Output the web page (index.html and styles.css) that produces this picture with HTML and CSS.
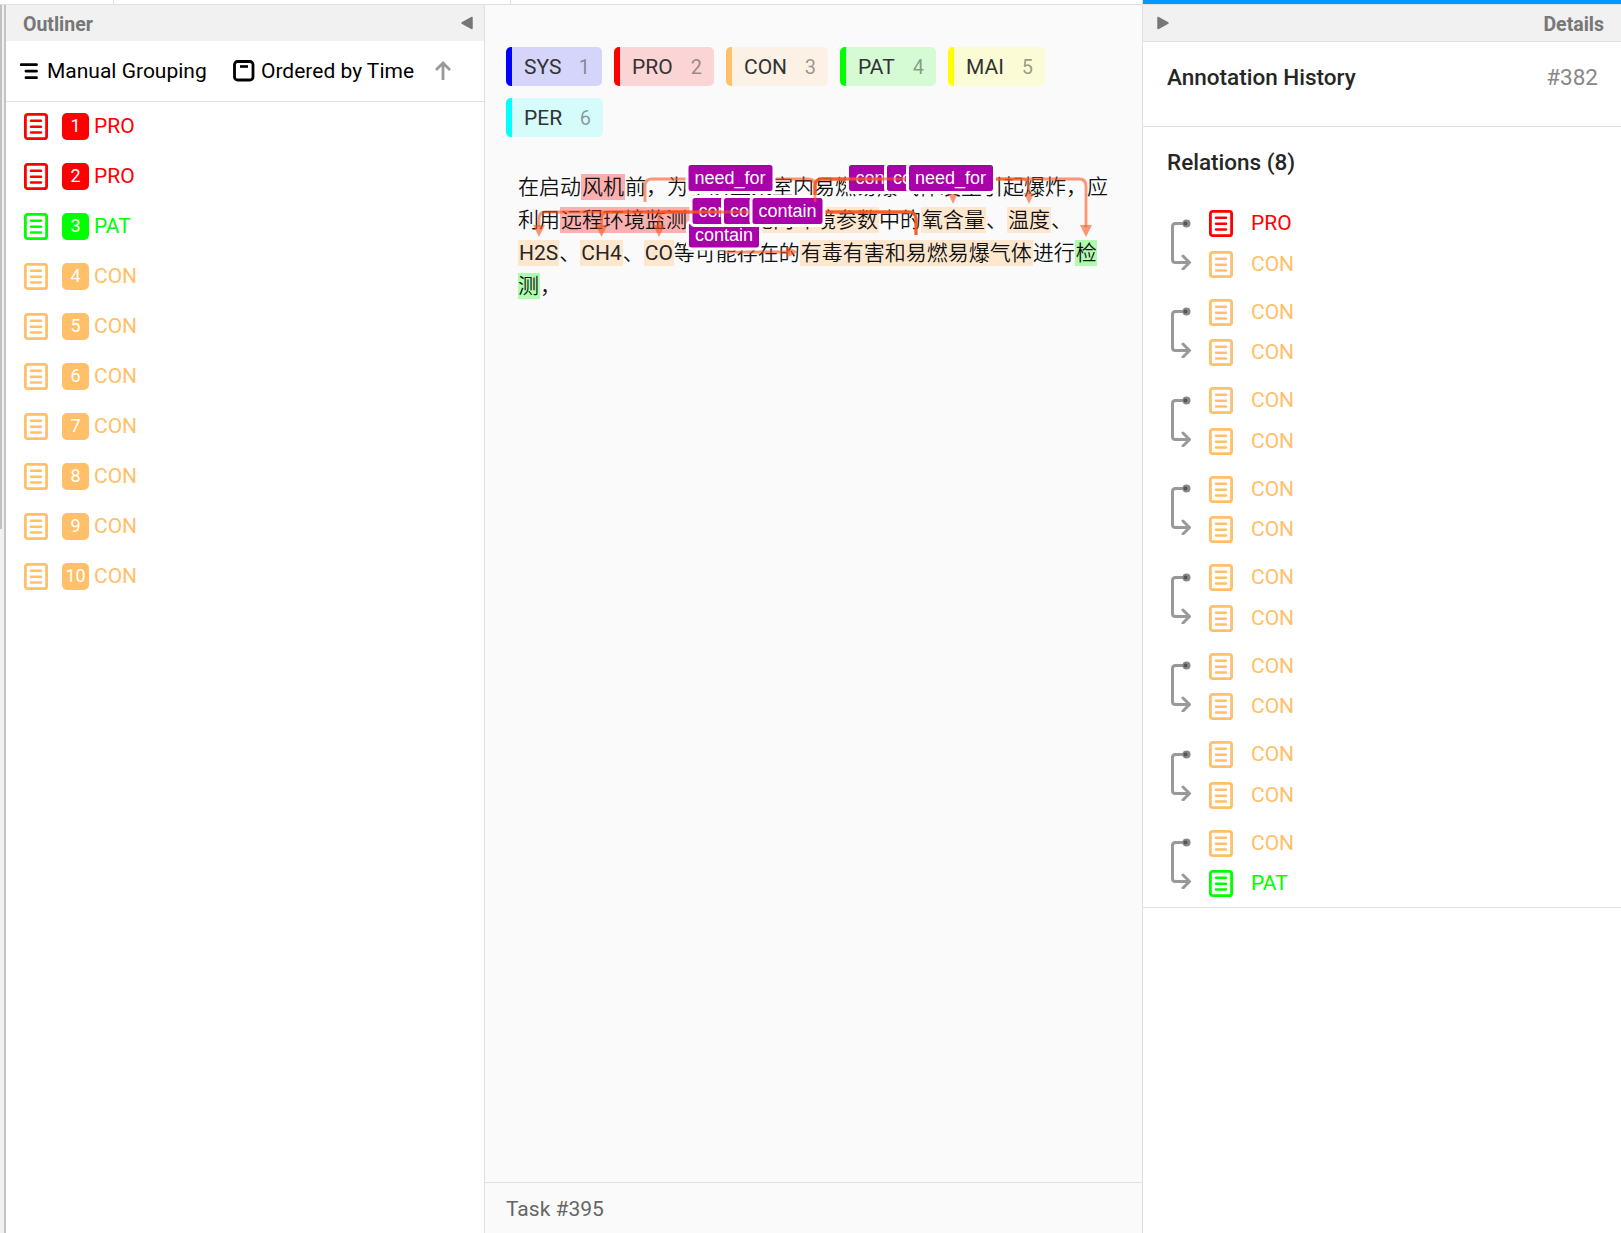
FILE: index.html
```html
<!DOCTYPE html>
<html lang="zh-CN">
<head>
    <meta charset="UTF-8">
    <meta name="viewport" content="width=device-width, initial-scale=1.0">
    <title>Labeling - Task #395</title>
    <link rel="stylesheet" href="styles.css">
</head>
<body>
    <svg class="sprite">
        <symbol id="icon-text" viewBox="0 0 24 27">
            <rect x="1.4" y="1.4" width="21.2" height="24.2" rx="2.2" fill="none" stroke="currentColor" stroke-width="2.8"/>
            <path d="M7 7.8h10M7 13.7h10M7 19.6h10" stroke="currentColor" stroke-width="2.5" stroke-linecap="round"/>
        </symbol>
        <symbol id="icon-relation" viewBox="0 0 21 51">
            <path d="M16 4.5H5.500Q2.500 4.500 2.500 7.500V40.500Q2.500 43.500 5.500 43.500H19M13 37L19.500 43.500L13 50" fill="none" stroke="#999" stroke-width="3" stroke-linecap="round" stroke-linejoin="round"/>
            <circle cx="16.500" cy="4.500" r="4" fill="#888"/>
            <circle cx="15.500" cy="4.500" r="2" fill="#555"/>
        </symbol>
    </svg>

    <div class="topbar">
        <div class="tab first"></div>
        <div class="tab second"></div>
        <div class="tab rest"></div>
        <div class="tab active"></div>
    </div>

    <div class="editor">
        <div class="gutter"><div class="thumb"></div></div>

        <div class="outliner">
            <div class="panel-header">
                <span>Outliner</span>
                <svg width="12" height="14" viewBox="0 0 12 14"><path d="M11 1.500V12.500L1 7Z" fill="#777" stroke="#777" stroke-width="1.500" stroke-linejoin="round"/></svg>
            </div>
            <div class="toolbar">
                <svg width="18" height="17" viewBox="0 0 18 17"><path d="M1.200 1.700H16.500M6 8.200H16.500M6 14.700H16.500" stroke="#000" stroke-width="2.800" stroke-linecap="round"/></svg>
                <span class="grouping">Manual Grouping</span>
                <svg width="22" height="22" viewBox="0 0 22 22"><rect x="1.500" y="1.500" width="18.500" height="18.500" rx="3" fill="none" stroke="#000" stroke-width="2.800"/><path d="M7 6.500H15" stroke="#000" stroke-width="2.600"/></svg>
                <span class="ordering">Ordered by Time</span>
                <svg width="18" height="20" viewBox="0 0 18 20"><path d="M9 19V2.500M2 9L9 2L16 9" fill="none" stroke="#999" stroke-width="2.800"/></svg>
            </div>
            <div class="regions">
                <div class="region pro"><svg class="icon"><use href="#icon-text"/></svg><span class="num">1</span>PRO</div>
                <div class="region pro"><svg class="icon"><use href="#icon-text"/></svg><span class="num">2</span>PRO</div>
                <div class="region pat"><svg class="icon"><use href="#icon-text"/></svg><span class="num">3</span>PAT</div>
                <div class="region con"><svg class="icon"><use href="#icon-text"/></svg><span class="num">4</span>CON</div>
                <div class="region con"><svg class="icon"><use href="#icon-text"/></svg><span class="num">5</span>CON</div>
                <div class="region con"><svg class="icon"><use href="#icon-text"/></svg><span class="num">6</span>CON</div>
                <div class="region con"><svg class="icon"><use href="#icon-text"/></svg><span class="num">7</span>CON</div>
                <div class="region con"><svg class="icon"><use href="#icon-text"/></svg><span class="num">8</span>CON</div>
                <div class="region con"><svg class="icon"><use href="#icon-text"/></svg><span class="num">9</span>CON</div>
                <div class="region con"><svg class="icon"><use href="#icon-text"/></svg><span class="num">10</span>CON</div>
            </div>
        </div>

        <div class="main">
            <div class="content">
                <div class="labels">
                    <div class="label sys">SYS <span>1</span></div>
                    <div class="label pro-label">PRO <span>2</span></div>
                    <div class="label con-label">CON <span>3</span></div>
                    <div class="label pat-label">PAT <span>4</span></div>
                    <div class="label mai">MAI <span>5</span></div>
                    <div class="label per">PER <span>6</span></div>
                </div>

                <div class="text">
                    <div class="lines">在启动<mark class="m-pro">风机</mark>前，为了防止泵室内易燃易爆气体发生引起爆炸，应<br>利用<mark class="m-pro">远程环境监测系统</mark>对<mark class="m-con">舱内环境参数</mark>中的<mark class="m-con">氧含量</mark>、<mark class="m-con">温度</mark>、<br><mark class="m-con latin">H2S</mark>、<mark class="m-con latin">CH4</mark>、<mark class="m-con latin">CO</mark>等可能存在的<mark class="m-con">有毒有害和易燃易爆气体</mark>进行<mark class="m-pat">检<br>测</mark>，</div>

                    <!-- relation arrows, drawn over the text -->
                    <svg class="arrows" width="620" height="130" viewBox="500 170 620 130">
                        <g>
                            <path class="line" d="M725 252H790"/>
                            <path class="head" d="M786 246L798 252L786 258Z"/>
                            <rect class="tag" x="687.500" y="221.500" width="73" height="27.500" rx="4"/>
                            <text x="695" y="241">contain</text>
                        </g>
                        <g>
                            <path class="line" d="M645 202V186Q645 179 652 179H808Q815 179 815 186V202"/>
                            <rect class="tag" x="687" y="163.500" width="87" height="29" rx="4"/>
                            <text x="694.500" y="184">need_for</text>
                        </g>
                        <g>
                            <path class="line" d="M815 202V186Q815 179 822 179H946Q953 179 953 186V194"/>
                            <path class="head" d="M948 193H958L953 204Z"/>
                            <rect class="tag" x="847.500" y="163.500" width="73" height="29" rx="4"/>
                            <text x="855.500" y="184">contain</text>
                        </g>
                        <g>
                            <path class="line" d="M815 202V186Q815 179 822 179H1022Q1029 179 1029 186V194"/>
                            <path class="head" d="M1024 193H1034L1029 204Z"/>
                            <rect class="tag" x="885.500" y="163.500" width="73" height="29" rx="4"/>
                            <text x="893" y="184">contain</text>
                        </g>
                        <g>
                            <path class="line" d="M916 235V219Q916 212 909 212H546Q539 212 539 219V227"/>
                            <path class="head" d="M533 225H545L539 237Z"/>
                            <rect class="tag" x="691" y="196.500" width="73" height="29" rx="4"/>
                            <text x="698.500" y="217">contain</text>
                        </g>
                        <g>
                            <path class="line" d="M916 235V219Q916 212 909 212H608Q601.500 212 601.500 219V227"/>
                            <path class="head" d="M595.500 225H607.500L601.500 237Z"/>
                            <rect class="tag" x="722.500" y="196.500" width="73" height="29" rx="4"/>
                            <text x="730" y="217">contain</text>
                        </g>
                        <g>
                            <path class="line" d="M916 235V219Q916 212 909 212H665Q659 212 659 219V227"/>
                            <path class="head" d="M653 225H665L659 237Z"/>
                            <rect class="tag" x="751" y="196.500" width="73" height="29" rx="4"/>
                            <text x="758.500" y="217">contain</text>
                        </g>
                        <g>
                            <path class="line" d="M815 202V186Q815 179 822 179H1079Q1086 179 1086 186V227"/>
                            <path class="head" d="M1080 225H1092L1086 237Z"/>
                            <rect class="tag" x="907.500" y="163.500" width="87" height="29" rx="4"/>
                            <text x="915" y="184">need_for</text>
                        </g>
                    </svg>
                </div>
            </div>
            <div class="footer">Task #395</div>
        </div>

        <div class="details">
            <div class="panel-header bordered">
                <svg width="12" height="14" viewBox="0 0 12 14"><path d="M1 1.500V12.500L11 7Z" fill="#777" stroke="#777" stroke-width="1.500" stroke-linejoin="round"/></svg>
                <span>Details</span>
            </div>
            <div class="history">
                <span class="title">Annotation History</span>
                <span class="id">#382</span>
            </div>
            <div class="relations">
                <div class="title">Relations (8)</div>
                <div class="list">
                    <div class="relation">
                        <svg class="bracket"><use href="#icon-relation"/></svg>
                        <div class="pair">
                            <div class="node pro"><svg class="icon"><use href="#icon-text"/></svg>PRO</div>
                            <div class="node con"><svg class="icon"><use href="#icon-text"/></svg>CON</div>
                        </div>
                    </div>
                    <div class="relation">
                        <svg class="bracket"><use href="#icon-relation"/></svg>
                        <div class="pair">
                            <div class="node con"><svg class="icon"><use href="#icon-text"/></svg>CON</div>
                            <div class="node con"><svg class="icon"><use href="#icon-text"/></svg>CON</div>
                        </div>
                    </div>
                    <div class="relation">
                        <svg class="bracket"><use href="#icon-relation"/></svg>
                        <div class="pair">
                            <div class="node con"><svg class="icon"><use href="#icon-text"/></svg>CON</div>
                            <div class="node con"><svg class="icon"><use href="#icon-text"/></svg>CON</div>
                        </div>
                    </div>
                    <div class="relation">
                        <svg class="bracket"><use href="#icon-relation"/></svg>
                        <div class="pair">
                            <div class="node con"><svg class="icon"><use href="#icon-text"/></svg>CON</div>
                            <div class="node con"><svg class="icon"><use href="#icon-text"/></svg>CON</div>
                        </div>
                    </div>
                    <div class="relation">
                        <svg class="bracket"><use href="#icon-relation"/></svg>
                        <div class="pair">
                            <div class="node con"><svg class="icon"><use href="#icon-text"/></svg>CON</div>
                            <div class="node con"><svg class="icon"><use href="#icon-text"/></svg>CON</div>
                        </div>
                    </div>
                    <div class="relation">
                        <svg class="bracket"><use href="#icon-relation"/></svg>
                        <div class="pair">
                            <div class="node con"><svg class="icon"><use href="#icon-text"/></svg>CON</div>
                            <div class="node con"><svg class="icon"><use href="#icon-text"/></svg>CON</div>
                        </div>
                    </div>
                    <div class="relation">
                        <svg class="bracket"><use href="#icon-relation"/></svg>
                        <div class="pair">
                            <div class="node con"><svg class="icon"><use href="#icon-text"/></svg>CON</div>
                            <div class="node con"><svg class="icon"><use href="#icon-text"/></svg>CON</div>
                        </div>
                    </div>
                    <div class="relation">
                        <svg class="bracket"><use href="#icon-relation"/></svg>
                        <div class="pair">
                            <div class="node con"><svg class="icon"><use href="#icon-text"/></svg>CON</div>
                            <div class="node pat"><svg class="icon"><use href="#icon-text"/></svg>PAT</div>
                        </div>
                    </div>
                </div>
            </div>
        </div>
    </div>
</body>
</html>
```
FILE: styles.css
```css
* {
    box-sizing: border-box;
}

body {
    margin: 0;
    height: 100vh;
    display: flex;
    flex-direction: column;
    overflow: hidden;
    background-color: #fff;
    color: #262626;
    font-family: Roboto, "Noto Sans CJK SC", sans-serif;
    font-size: 21px;
    line-height: 33px;
}

svg {
    display: block;
    flex: none;
}

.sprite {
    display: none;
}

/* bottom edge of the tab strip */
.topbar {
    display: flex;
    height: 5px;
    flex: none;
    padding-left: 5px;
    border-bottom: 1px solid #e0e0e0;
}

.tab {
    border-right: 1px solid #e0e0e0;
}

.first {
    width: 109px;
}

.second {
    width: 397px;
}

.rest {
    width: 632px;
}

.active {
    flex: 1;
    border: none;
    background-color: #0099ff;
}

.editor {
    display: flex;
    flex: 1;
    min-height: 0;
}

.gutter {
    width: 6px;
    background-color: #f1f1f1;
    border-right: 2px solid #c4c4c4;
}

.thumb {
    width: 2px;
    height: 524px;
    background-color: #c1c1c1;
}

.panel-header {
    display: flex;
    justify-content: space-between;
    align-items: center;
    height: 36px;
    padding: 0 11px 0 17px;
    background-color: #f1f1f1;
    color: #777;
    font-size: 19.5px;
    font-weight: 700;
}

.panel-header span {
    padding-top: 2px;
}

.bordered {
    height: 37px;
    padding: 0 17px 0 14px;
    border-bottom: 1px solid #e0e0e0;
}

.pro {
    color: #ff0000;
}

.con {
    color: #ffc069;
}

.pat {
    color: #00ff00;
}

.icon {
    width: 24px;
    height: 27px;
}

/* left panel */
.outliner {
    width: 479px;
    border-right: 1px solid #e0e0e0;
}

.toolbar {
    display: flex;
    align-items: center;
    height: 61px;
    padding-left: 14px;
    border-bottom: 1px solid #e0e0e0;
    color: #000;
    white-space: nowrap;
}

.grouping {
    width: 160px;
    margin: 0 26px 0 9px;
}

.ordering {
    width: 153px;
    margin: 0 20px 0 6px;
}

.regions {
    display: flex;
    flex-direction: column;
}

.region {
    display: flex;
    align-items: center;
    height: 50px;
    padding: 0 0 2px 18px;
}

.num {
    width: 27px;
    height: 27px;
    margin: 0 5px 0 14px;
    border-radius: 5px;
    background-color: currentColor;
    font-size: 18px;
    line-height: 26px;
    text-align: center;
}

.num::first-line {
    color: #fff;
}

/* center */
.main {
    display: flex;
    flex-direction: column;
    width: 657px;
    background-color: #fafafa;
}

.content {
    flex: 1;
    padding: 42px 12px 0 21px;
}

.labels {
    display: flex;
    flex-wrap: wrap;
    gap: 12px;
    padding-right: 40px;
}

.label {
    display: flex;
    justify-content: space-between;
    height: 39px;
    padding: 0 12px;
    border-left: 6px solid;
    border-radius: 5px;
    color: #333;
    line-height: 41px;
}

.label span {
    color: rgba(0, 0, 0, 0.4);
    font-size: 20px;
}

.sys {
    width: 96px;
    border-color: #0000ff;
    background-color: #d5d5fb;
}

.pro-label {
    width: 100px;
    border-color: #ff0000;
    background-color: #fbd5d5;
}

.con-label {
    width: 102px;
    border-color: #ffc069;
    background-color: #fbf1e4;
}

.pat-label {
    width: 96px;
    border-color: #00ff00;
    background-color: #d5fbd5;
}

.mai {
    width: 97px;
    border-color: #ffff00;
    background-color: #fbfbd5;
}

.per {
    width: 97px;
    border-color: #00ffff;
    background-color: #d5fbfb;
}

.text {
    position: relative;
    margin-top: 33px;
    padding-left: 12px;
}

.lines {
    padding-top: 1px;
    font-weight: 350;
    white-space: nowrap;
    color: #111;
}

mark {
    padding: 1px;
    color: #111;
}

.m-pro {
    background-color: #fcafaf;
}

.m-con {
    background-color: #fde8cf;
}

.m-pat {
    background-color: #affcaf;
}

.latin {
    color: #262626;
    font-weight: 400;
}

.arrows {
    position: absolute;
    top: 0;
    left: -6px;
    overflow: visible;
}

.line {
    fill: none;
    stroke: #fa541c;
    stroke-width: 2.8;
    opacity: 0.6;
}

.head {
    fill: #fa541c;
    opacity: 0.6;
}

.tag {
    fill: #aa00aa;
    stroke: #fff;
    stroke-width: 3;
}

.arrows text {
    fill: #fff;
    font-family: "Liberation Sans", Arial, sans-serif;
    font-size: 18px;
}

.footer {
    height: 51px;
    padding-left: 21px;
    border-top: 1px solid #e0e0e0;
    color: #666;
    line-height: 53px;
}

/* right panel */
.details {
    flex: 1;
    border-left: 1px solid #e0e0e0;
}

.title {
    font-size: 22.5px;
    font-weight: 500;
}

.history {
    display: flex;
    justify-content: space-between;
    height: 85px;
    padding: 19px 23px 0 24px;
    border-bottom: 1px solid #e0e0e0;
}

.id {
    color: #888;
    font-size: 22.5px;
}

.relations {
    height: 781px;
    padding: 19px 24px 0;
    border-bottom: 1px solid #e0e0e0;
}

.list {
    display: flex;
    flex-direction: column;
    gap: 15px;
    margin-top: 28px;
}

.relation {
    display: flex;
}

.bracket {
    width: 21px;
    height: 51px;
    margin: 11.5px 18px 0 3px;
}

.pair {
    display: flex;
    flex-direction: column;
    gap: 7.5px;
}

.node {
    display: flex;
    align-items: center;
    gap: 18px;
    height: 33px;
}
```
